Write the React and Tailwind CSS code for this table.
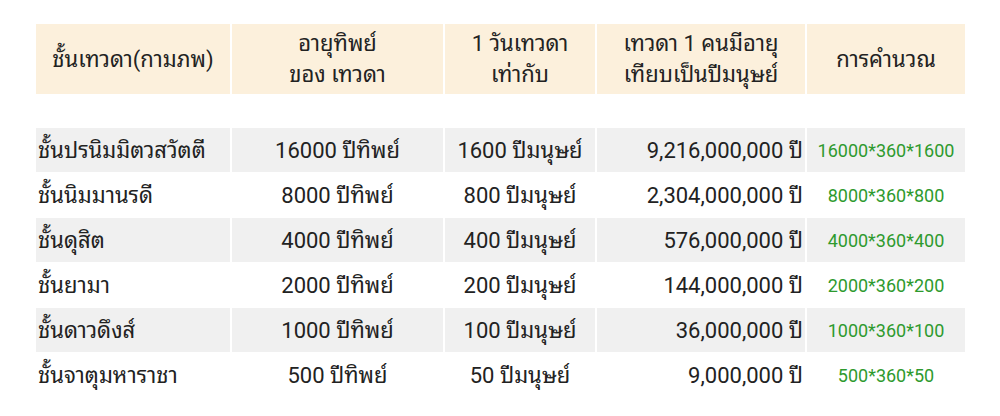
const rows = [
  ["ชั้นปรนิมมิตวสวัตตี", "16000 ปีทิพย์", "1600 ปีมนุษย์", "9,216,000,000 ปี", "16000*360*1600"],
  ["ชั้นนิมมานรดี", "8000 ปีทิพย์", "800 ปีมนุษย์", "2,304,000,000 ปี", "8000*360*800"],
  ["ชั้นดุสิต", "4000 ปีทิพย์", "400 ปีมนุษย์", "576,000,000 ปี", "4000*360*400"],
  ["ชั้นยามา", "2000 ปีทิพย์", "200 ปีมนุษย์", "144,000,000 ปี", "2000*360*200"],
  ["ชั้นดาวดึงส์", "1000 ปีทิพย์", "100 ปีมนุษย์", "36,000,000 ปี", "1000*360*100"],
  ["ชั้นจาตุมหาราชา", "500 ปีทิพย์", "50 ปีมนุษย์", "9,000,000 ปี", "500*360*50"],
];

export default function App() {
  return (
    <div className="w-[1000px] h-[416px] bg-white pt-[23px] pl-[34px] font-['Roboto','Noto_Sans_Thai_Looped','Loma','Garuda','Noto_Sans_Thai',sans-serif] text-[#222]">
      <table className="border-separate border-spacing-x-[2px] border-spacing-y-[1px] text-[22px]">
        <colgroup>
          <col className="w-[194px]" />
          <col className="w-[211px]" />
          <col className="w-[150px]" />
          <col className="w-[208px]" />
          <col className="w-[158px]" />
        </colgroup>
        <thead>
          <tr className="h-[70px] bg-[#fcf0dc] leading-[31px]">
            <th className="font-normal text-center">ชั้นเทวดา(กามภพ)</th>
            <th className="font-normal text-center">อายุทิพย์<br />ของ เทวดา</th>
            <th className="font-normal text-center">1 วันเทวดา<br />เท่ากับ</th>
            <th className="font-normal text-center">เทวดา 1 คนมีอายุ<br />เทียบเป็นปีมนุษย์</th>
            <th className="font-normal text-center">การคำนวณ</th>
          </tr>
        </thead>
        <tbody>
          <tr className="h-[32px]"><td colSpan={5}></td></tr>
          {rows.map((r, i) => (
            <tr key={i} className={"h-[44px] " + (i % 2 === 0 ? "bg-[#f0f0f0]" : "bg-white")}>
              <td className="pl-[2px] text-left whitespace-nowrap">{r[0]}</td>
              <td className="text-center whitespace-nowrap">{r[1]}</td>
              <td className="text-center whitespace-nowrap">{r[2]}</td>
              <td className="text-right pr-[2px] whitespace-nowrap">{r[3]}</td>
              <td className="text-center text-[18px] text-[#2e9a2e] whitespace-nowrap">{r[4]}</td>
            </tr>
          ))}
        </tbody>
      </table>
    </div>
  );
}
